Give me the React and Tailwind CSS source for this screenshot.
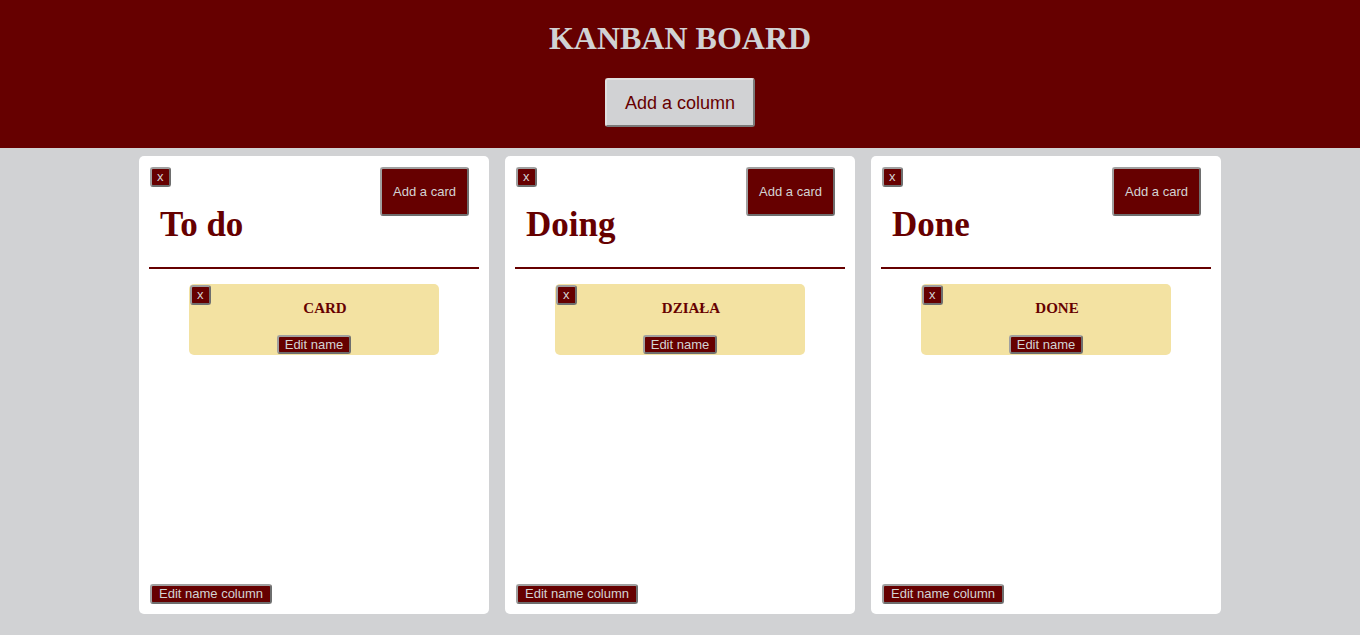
import React from 'react';

const btn =
  "bg-[#660000] text-[#d3d3d3] border-2 border-t-[#a0a0a0] border-l-[#a0a0a0] border-r-[#6e6e6e] border-b-[#6e6e6e] rounded-[3px] text-[13px] leading-[15px] [font-family:'Liberation_Sans',Arial,sans-serif]";

const columns = [
  { name: 'To do', cards: ['CARD'] },
  { name: 'Doing', cards: ['DZIAŁA'] },
  { name: 'Done', cards: ['DONE'] }
];

const Card = ({ name }) => (
  <div className="relative mx-auto flex h-[71px] w-[250px] flex-col items-center rounded-[5px] bg-[#f3e2a2] pt-[15px]">
    <button className={`${btn} absolute left-[1px] top-[1px] px-[5px] pb-[1px]`}>x</button>
    <p className="pl-[22px] text-[15px] font-bold leading-[18px] text-[#660000] [font-family:'Liberation_Serif','Times_New_Roman',serif]">
      {name}
    </p>
    <button className={`${btn} mt-[18px] px-[6px]`}>Edit name</button>
  </div>
);

const Column = ({ name, cards }) => (
  <div className="flex h-[458px] w-[350px] flex-col rounded-[5px] bg-white">
    <div className="flex justify-between pl-[11px] pr-[20px] pt-[11px]">
      <div className="flex flex-col items-start">
        <button className={`${btn} px-[5px] pb-[1px]`}>x</button>
        <h2 className="ml-[10px] mt-[17px] text-[35px] font-bold leading-[42px] text-[#660000] [font-family:'Liberation_Serif','Times_New_Roman',serif]">
          {name}
        </h2>
      </div>
      <button className={`${btn} h-[49px] w-[89px]`}>Add a card</button>
    </div>
    <div className="mx-[10px] mt-[21px] h-[2px] bg-[#660000]" />
    <div className="mt-[15px] flex flex-col gap-[10px]">
      {cards.map((c) => (
        <Card key={c} name={c} />
      ))}
    </div>
    <div className="mt-auto pb-[10px] pl-[11px]">
      <button className={`${btn} h-[20px] px-[7px]`}>Edit name column</button>
    </div>
  </div>
);

export default function App() {
  return (
    <div className="min-h-[635px] bg-[#d1d2d4]">
      <header className="flex flex-col items-center bg-[#660000] pb-[21px] pt-[18px]">
        <h1 className="text-[32px] font-bold leading-[40px] text-[#d1d2d4] [font-family:'Liberation_Serif','Times_New_Roman',serif]">
          KANBAN BOARD
        </h1>
        <button className="mt-[20px] h-[49px] w-[150px] rounded-[3px] border-2 border-t-[#e0e0e0] border-l-[#e0e0e0] border-r-[#7a7a7a] border-b-[#7a7a7a] bg-[#d1d2d4] pt-[1px] text-[18px] leading-[21px] text-[#660000] [font-family:'Liberation_Sans',Arial,sans-serif]">
          Add a column
        </button>
      </header>
      <main className="flex justify-center gap-[16px] pt-[8px]">
        {columns.map((col) => (
          <Column key={col.name} {...col} />
        ))}
      </main>
    </div>
  );
}
